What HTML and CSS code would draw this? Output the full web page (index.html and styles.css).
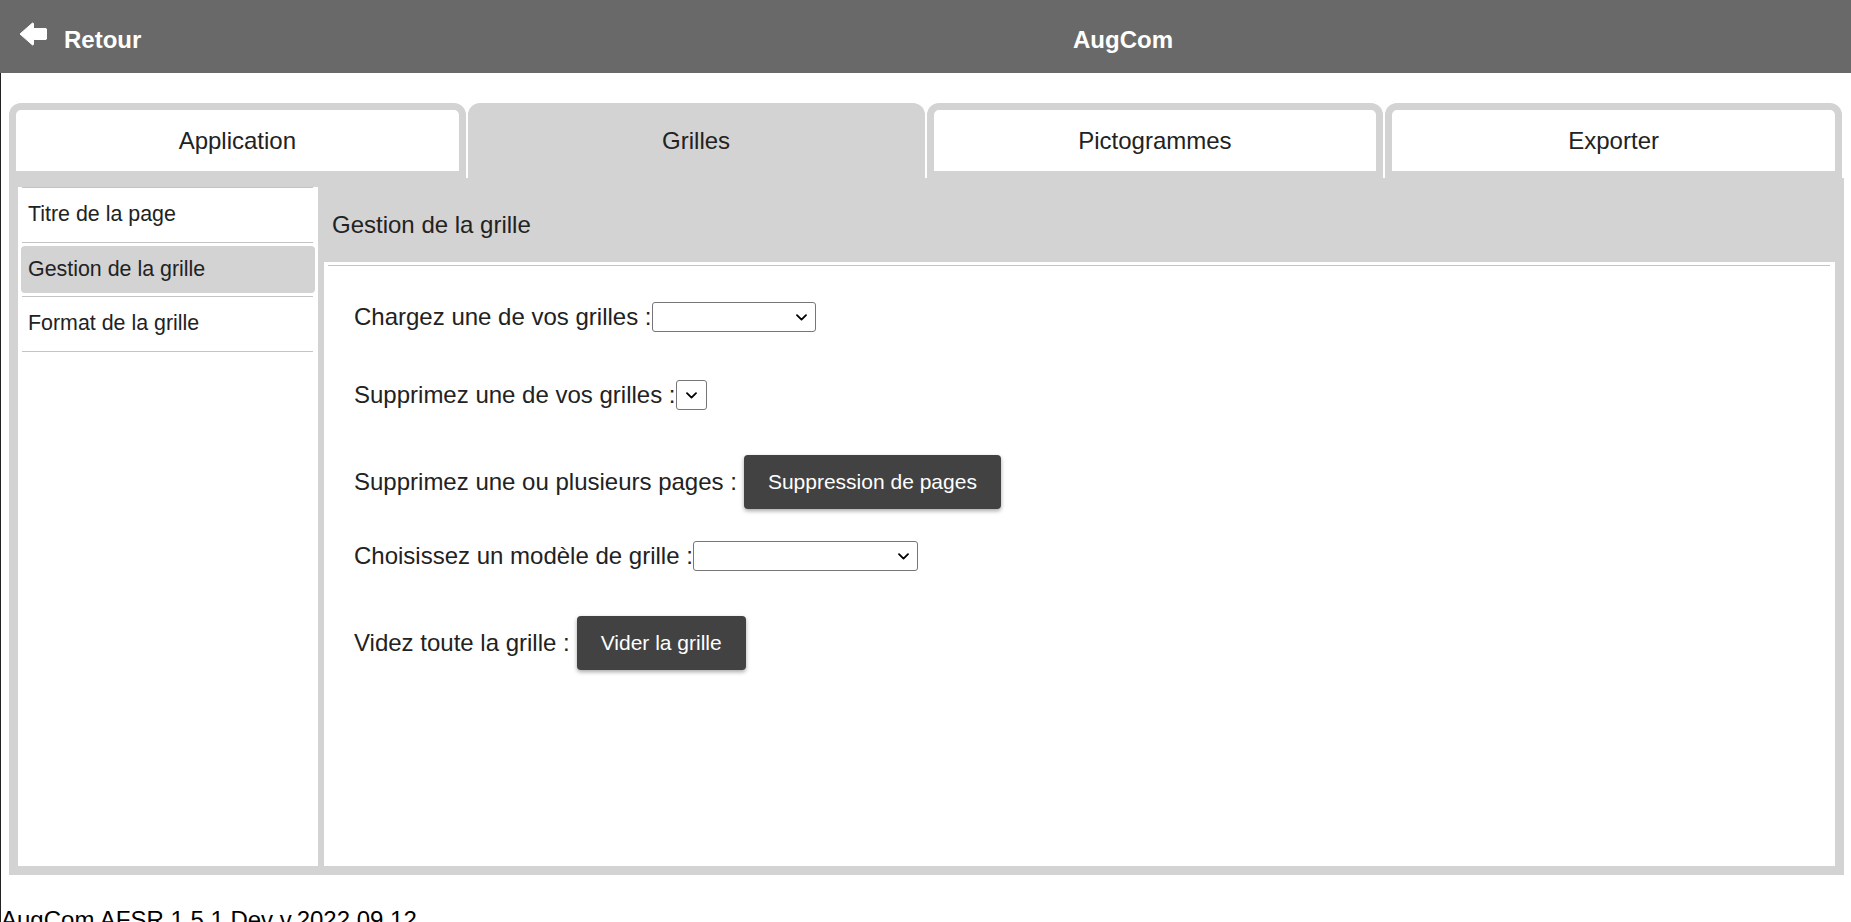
FILE: index.html
```html
<!DOCTYPE html>
<html lang="fr">
<head>
<meta charset="utf-8">
<title>AugCom</title>
<link rel="stylesheet" href="styles.css">
</head>
<body>
<header class="topbar">
  <a class="back" href="#">
    <svg class="back-icon" width="28" height="24" viewBox="0 0 28 24" aria-hidden="true">
      <path d="M1 12 L13.5 1 L14.5 1.5 L14.5 6.5 L27 6.5 L27.5 7 L27.5 17 L27 17.5 L14.5 17.5 L14.5 22.5 L13.5 23 Z" fill="#fff" stroke="#fff" stroke-width="1" stroke-linejoin="round"/>
    </svg>
    <span>Retour</span>
  </a>
  <div class="title">AugCom</div>
</header>

<div class="page">
  <div class="workspace">
    <nav class="tabs">
      <div class="tab">Application</div>
      <div class="tab active">Grilles</div>
      <div class="tab">Pictogrammes</div>
      <div class="tab">Exporter</div>
    </nav>

    <section class="panel">
      <aside class="sidebar">
        <ul class="menu">
          <li><a href="#">Titre de la page</a></li>
          <li class="current"><a href="#">Gestion de la grille</a></li>
          <li><a href="#">Format de la grille</a></li>
        </ul>
      </aside>

      <div class="content">
        <div class="content-head">Gestion de la grille</div>
        <div class="content-body">
          <div class="rule"></div>
          <div class="form">
            <div class="row sel-row">
              <span>Chargez une de vos grilles :</span><select class="sel sel-load"><option></option></select>
            </div>
            <div class="row sel-row">
              <span>Supprimez une de vos grilles :</span><select class="sel sel-delete"><option></option></select>
            </div>
            <div class="row btn-row">
              <span>Supprimez une ou plusieurs pages :</span><button class="btn" type="button">Suppression de pages</button>
            </div>
            <div class="row sel-row">
              <span>Choisissez un modèle de grille :</span><select class="sel sel-model"><option></option></select>
            </div>
            <div class="row btn-row">
              <span>Videz toute la grille :</span><button class="btn" type="button">Vider la grille</button>
            </div>
          </div>
        </div>
      </div>
    </section>
  </div>
  <p class="version">AugCom AFSR 1.5.1 Dev v.2022.09.12</p>
</div>
</body>
</html>
```

FILE: styles.css
```css
html, body {
  margin: 0;
  padding: 0;
  background: #fff;
}

body {
  font-family: "Liberation Sans", Arial, sans-serif;
  color: #222;
}

/* ---------- top bar ---------- */
.topbar {
  height: 73px;
  box-sizing: border-box;
  padding-top: 6px;
  background: #696969;
  color: #fff;
  display: flex;
  align-items: center;
}

.back {
  width: 395px;
  box-sizing: border-box;
  padding-left: 19px;
  display: flex;
  align-items: center;
  color: #fff;
  text-decoration: none;
  font-weight: bold;
  font-size: 24px;
}

.back-icon {
  display: block;
  margin-right: 17px;
  margin-bottom: 11px;
}

.title {
  flex: 1;
  text-align: center;
  font-weight: bold;
  font-size: 24px;
}

/* ---------- page ---------- */
.page {
  border-left: 1px solid #222;
}

.workspace {
  padding: 30px 7px 0 8px;
}

.tabs {
  display: flex;
  gap: 2px;
  margin-right: 2px;
}

.tab {
  flex: 1;
  height: 75px;
  box-sizing: border-box;
  border: 7px solid #d3d3d3;
  border-radius: 12px 12px 0 0;
  background: #fff;
  display: flex;
  align-items: center;
  justify-content: center;
  font-size: 24px;
  color: #222;
}

.tab.active {
  background: #d3d3d3;
}

.panel {
  height: 697px;
  box-sizing: border-box;
  padding: 9px;
  background: #d3d3d3;
  display: flex;
  gap: 6px;
}

/* ---------- sidebar ---------- */
.sidebar {
  width: 300px;
  flex: none;
  box-sizing: border-box;
  padding: 0 5px 0 4px;
  background: #fff;
}

.menu {
  list-style: none;
  margin: 0;
  padding: 0;
  border-top: 1px solid #c4c4c4;
}

.menu li {
  padding: 3px 0;
  border-bottom: 1px solid #c4c4c4;
}

.menu a {
  display: block;
  margin: 0 -2px 0 -1px;
  padding: 12px 7px;
  line-height: 23.5px;
  font-size: 21.4px;
  color: #222;
  text-decoration: none;
  border-radius: 4px;
}

.menu li.current a {
  background: #d3d3d3;
}

/* ---------- content ---------- */
.content {
  flex: 1;
  display: flex;
  flex-direction: column;
}

.content-head {
  height: 75px;
  flex: none;
  display: flex;
  align-items: center;
  padding-left: 8px;
  font-size: 24px;
  color: #222;
}

.content-body {
  flex: 1;
  background: #fff;
  padding: 3px 5px 0 4px;
}

.rule {
  height: 1px;
  background: #c4c4c4;
}

.form {
  padding: 36px 0 0 26px;
}

.row {
  display: flex;
  align-items: center;
  font-size: 24px;
  color: #222;
}

.row + .row {
  margin-top: 46px;
}

.sel-row + .sel-row {
  margin-top: 48px;
}

.btn-row + .row {
  margin-top: 32px;
}

.sel-row + .btn-row {
  margin-top: 45px;
}

.sel {
  -webkit-appearance: none;
  appearance: none;
  height: 30px;
  box-sizing: border-box;
  border: 1px solid #767676;
  border-radius: 3px;
  background-color: #fff;
  background-image: url("data:image/svg+xml,%3Csvg xmlns='http://www.w3.org/2000/svg' width='11' height='7' viewBox='0 0 11 7'%3E%3Cpath d='M1 1.2 L5.5 5.6 L10 1.2' fill='none' stroke='%23000' stroke-width='1.8' stroke-linecap='round' stroke-linejoin='round'/%3E%3C/svg%3E");
  background-repeat: no-repeat;
  background-size: 11px 7px;
  background-position: right 8px center;
  font-family: "Liberation Sans", Arial, sans-serif;
  font-size: 18px;
  color: #000;
}

.sel-load { width: 164px; }
.sel-delete { width: 31px; background-position: center center; }
.sel-model { width: 225px; }

.btn {
  margin-left: 7px;
  padding: 15px 24px;
  border: 0;
  border-radius: 4px;
  background: #424242;
  color: #fff;
  font-family: "Liberation Sans", Arial, sans-serif;
  font-size: 21px;
  line-height: 24px;
  box-shadow: 0 2px 4px rgba(0, 0, 0, 0.35);
  cursor: pointer;
}

.version {
  margin: 31px 0 0 0;
  font-size: 24px;
  color: #000;
}
```
